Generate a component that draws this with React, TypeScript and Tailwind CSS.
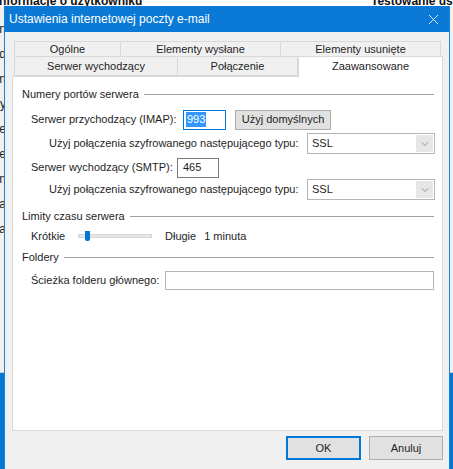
import { ChevronDown, X } from 'lucide-react';

const font = { fontFamily: '"Liberation Sans", Arial, sans-serif' };

function GroupLabel({ text }: { text: string }) {
  return (
    <div className="flex items-center gap-[5px] h-[16px] pl-[9px] pr-[8px] text-[#1e1e1e]">
      <span className="whitespace-nowrap">{text}</span>
      <div className="flex-1 h-px bg-[#a0a0a0]" />
    </div>
  );
}

function Select({ value }: { value: string }) {
  return (
    <div className="flex items-stretch shrink-0 w-[128px] h-[21px] border border-[#b5b5b5] bg-white">
      <span className="flex-1 pl-[4px] leading-[19px]">{value}</span>
      <div className="w-[17px] m-[1px] bg-[#e6e6e6] flex items-center justify-center">
        <ChevronDown size={12} strokeWidth={1.2} className="text-[#606060]" />
      </div>
    </div>
  );
}

export default function App() {
  return (
    <div className="relative w-[453px] h-[469px] overflow-hidden bg-[#0078d7] whitespace-nowrap" style={font}>
      {/* window behind the dialog */}
      <div className="absolute left-0 top-0 w-[453px] h-[373px] bg-[#f0f0f0] border-b border-[#c8c8c8]">
        <div className="flex h-[7px] overflow-hidden bg-white text-[12px] font-bold leading-[3px] text-[#111]">
          <span className="w-[372px] shrink-0 -ml-[1px]">nformacje o użytkowniku</span>
          <span>Testowanie ust</span>
        </div>
        <div className="flex flex-col items-end w-[4px] overflow-hidden text-[12px] text-[#222] leading-[25px] mt-[10px]">
          <span className="-mr-[2px]">n</span>
          <span className="-mr-[2px]">d</span>
          <span className="-mr-[2px]">n</span>
          <span className="-mr-[2px]">y</span>
          <span className="-mr-[2px]">e</span>
          <span className="-mr-[2px]">e</span>
          <span className="-mr-[2px]">n</span>
          <span className="-mr-[2px]">a</span>
          <span className="-mr-[2px]">a</span>
        </div>
      </div>

      {/* dialog */}
      <div className="absolute left-[4px] top-[6px] w-[446px] h-[463px] bg-[#f0f0f0] border-x border-[#1883d7] flex flex-col">
        <div className="h-[26px] bg-[#0b7ad6] flex items-center justify-between pl-[4px] pr-[7px] text-white text-[12px]">
          <span>Ustawienia internetowej poczty e-mail</span>
          <X size={17} strokeWidth={1.2} />
        </div>

        <div className="flex flex-col pl-[7px] pr-[6px] pt-[9px] text-[11px]">
          {/* tab rows */}
          <div className="flex ml-[2px] mr-[2px] h-[16px] text-[#1e1e1e]">
            <div className="w-[107px] border border-[#d9d9d9] flex items-center justify-center">Ogólne</div>
            <div className="w-[160px] border border-l-0 border-[#d9d9d9] flex items-center justify-center">Elementy wysłane</div>
            <div className="flex-1 border border-l-0 border-[#d9d9d9] flex items-center justify-center">Elementy usunięte</div>
          </div>
          <div className="flex ml-[2px] h-[19px] text-[#1e1e1e]">
            <div className="w-[164px] h-[18px] mt-[1px] border border-t-0 border-[#d9d9d9] flex items-center justify-center">Serwer wychodzący</div>
            <div className="w-[120px] h-[18px] mt-[1px] border border-t-0 border-l-0 border-[#d9d9d9] flex items-center justify-center">Połączenie</div>
            <div className="flex-1 -mt-[1px] h-[21px] bg-white border border-b-0 border-[#d9d9d9] flex items-start pt-[1px] justify-center relative z-10">Zaawansowane</div>
          </div>

          {/* panel */}
          <div className="h-[355px] bg-white border border-[#d9d9d9] text-[#1e1e1e] flex flex-col pt-[9px]">
            <GroupLabel text="Numery portów serwera" />
            <div className="flex items-center h-[19px] mt-[8px] pl-[18px]">
              <span className="w-[152px] shrink-0">Serwer przychodzący (IMAP):</span>
              <div className="w-[43px] h-[20px] shrink-0 border border-[#0078d7] flex items-center pl-[2px]">
                <span className="bg-[#3399ff] text-white leading-[15px] px-[1px]">993</span>
              </div>
              <div className="ml-[9px] w-[96px] h-[20px] shrink-0 border border-[#adadad] bg-[#e1e1e1] flex items-center justify-center">Użyj domyślnych</div>
            </div>
            <div className="flex items-center h-[21px] mt-[4px] pl-[36px]">
              <span className="w-[258px] shrink-0">Użyj połączenia szyfrowanego następującego typu:</span>
              <Select value="SSL" />
            </div>
            <div className="flex items-center h-[19px] mt-[4px] pl-[18px]">
              <span className="w-[146px] shrink-0">Serwer wychodzący (SMTP):</span>
              <div className="w-[42px] h-[20px] shrink-0 border border-[#7a7a7a] flex items-center pl-[5px]">465</div>
            </div>
            <div className="flex items-center h-[21px] mt-[2px] pl-[36px]">
              <span className="w-[258px] shrink-0">Użyj połączenia szyfrowanego następującego typu:</span>
              <Select value="SSL" />
            </div>

            <div className="mt-[8px]">
              <GroupLabel text="Limity czasu serwera" />
            </div>
            <div className="flex items-center h-[20px] mt-[2px] pl-[18px]">
              <span className="w-[47px] shrink-0">Krótkie</span>
              <div className="relative w-[74px] h-[10px] shrink-0 flex items-center">
                <div className="w-full h-[4px] bg-[#e7e7e7] border border-[#d6d6d6]" />
                <div className="absolute left-[7px] top-0 w-[5px] h-[10px] bg-[#0078d7] rounded-b-[2px]" />
              </div>
              <span className="ml-[13px]">Długie</span>
              <span className="ml-[8px]">1 minuta</span>
            </div>

            <div className="mt-[3px]">
              <GroupLabel text="Foldery" />
            </div>
            <div className="flex items-center h-[19px] mt-[6px] pl-[18px]">
              <span className="w-[134px] shrink-0">Ścieżka folderu głównego:</span>
              <div className="w-[269px] h-[19px] shrink-0 border border-[#b5b5b5]" />
            </div>
          </div>

          {/* buttons */}
          <div className="flex justify-end gap-[8px] mt-[5px] text-[#1e1e1e]">
            <div className="w-[75px] h-[24px] border-2 border-[#0078d7] bg-[#e1e1e1] flex items-center justify-center">OK</div>
            <div className="w-[74px] h-[24px] border border-[#adadad] bg-[#e1e1e1] flex items-center justify-center">Anuluj</div>
          </div>
        </div>
      </div>
    </div>
  );
}
